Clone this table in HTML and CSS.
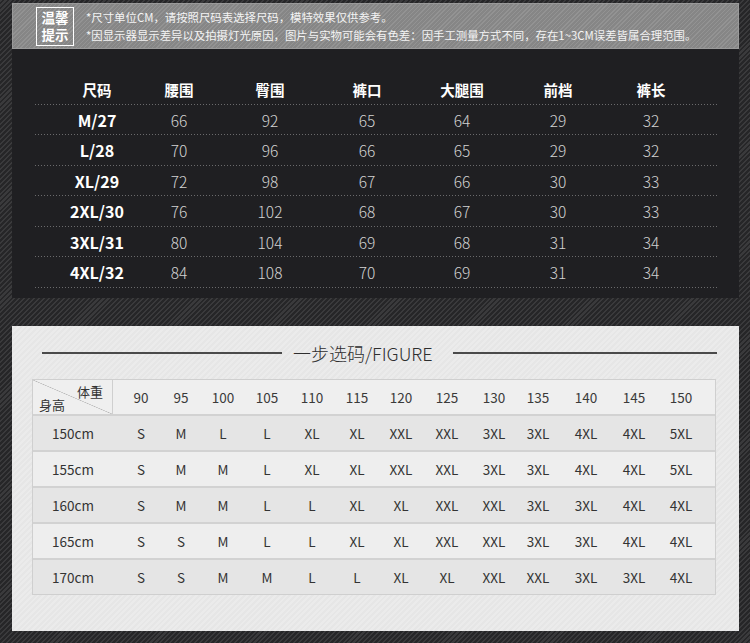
FILE: index.html
```html
<!DOCTYPE html>
<html lang="zh">
<head>
<meta charset="utf-8">
<title>尺码表</title>
<link rel="stylesheet" href="styles.css">
</head>
<body>
<div class="page">
  <section class="notice">
    <div class="tip"><span>温馨</span><span>提示</span></div>
    <div class="notes">
      <p>*尺寸单位CM，请按照尺码表选择尺码，模特效果仅供参考。</p>
      <p>*因显示器显示差异以及拍摄灯光原因，图片与实物可能会有色差：因手工测量方式不同，存在1~3CM误差皆属合理范围。</p>
    </div>
  </section>
  <section class="dark">
    <div class="sizes">
      <div class="srow head"><span>尺码</span><span>腰围</span><span>臀围</span><span>裤口</span><span>大腿围</span><span>前档</span><span>裤长</span></div>
      <div class="srow"><span class="sz">M/27</span><span>66</span><span>92</span><span>65</span><span>64</span><span>29</span><span>32</span></div>
      <div class="srow"><span class="sz">L/28</span><span>70</span><span>96</span><span>66</span><span>65</span><span>29</span><span>32</span></div>
      <div class="srow"><span class="sz">XL/29</span><span>72</span><span>98</span><span>67</span><span>66</span><span>30</span><span>33</span></div>
      <div class="srow"><span class="sz">2XL/30</span><span>76</span><span>102</span><span>68</span><span>67</span><span>30</span><span>33</span></div>
      <div class="srow"><span class="sz">3XL/31</span><span>80</span><span>104</span><span>69</span><span>68</span><span>31</span><span>34</span></div>
      <div class="srow"><span class="sz">4XL/32</span><span>84</span><span>108</span><span>70</span><span>69</span><span>31</span><span>34</span></div>
    </div>
  </section>
  <section class="light">
    <div class="title"><i class="line left"></i><h2>一步选码/FIGURE</h2><i class="line right"></i></div>
    <div class="chart">
      <div class="crow head">
        <div class="corner"><span class="w">体重</span><span class="h">身高</span></div>
        <span>90</span><span>95</span><span>100</span><span>105</span><span>110</span><span>115</span><span>120</span><span>125</span><span>130</span><span>135</span><span>140</span><span>145</span><span>150</span>
      </div>
      <div class="crow dk"><span>150cm</span><span>S</span><span>M</span><span>L</span><span>L</span><span>XL</span><span>XL</span><span>XXL</span><span>XXL</span><span>3XL</span><span>3XL</span><span>4XL</span><span>4XL</span><span>5XL</span></div>
      <div class="crow lt"><span>155cm</span><span>S</span><span>M</span><span>M</span><span>L</span><span>XL</span><span>XL</span><span>XXL</span><span>XXL</span><span>3XL</span><span>3XL</span><span>4XL</span><span>4XL</span><span>5XL</span></div>
      <div class="crow dk"><span>160cm</span><span>S</span><span>M</span><span>M</span><span>L</span><span>L</span><span>XL</span><span>XL</span><span>XXL</span><span>XXL</span><span>3XL</span><span>3XL</span><span>4XL</span><span>4XL</span></div>
      <div class="crow lt"><span>165cm</span><span>S</span><span>S</span><span>M</span><span>L</span><span>L</span><span>XL</span><span>XL</span><span>XXL</span><span>XXL</span><span>3XL</span><span>3XL</span><span>4XL</span><span>4XL</span></div>
      <div class="crow dk"><span>170cm</span><span>S</span><span>S</span><span>M</span><span>M</span><span>L</span><span>L</span><span>XL</span><span>XL</span><span>XXL</span><span>XXL</span><span>3XL</span><span>3XL</span><span>4XL</span></div>
    </div>
  </section>
</div>
</body>
</html>
```

FILE: styles.css
```css
* { box-sizing: border-box; }
html, body { margin: 0; padding: 0; }
body {
  width: 750px;
  height: 643px;
  overflow: hidden;
  font-family: "Noto Sans CJK SC", "Noto Sans", sans-serif;
  background-color: #343436;
  background-image: repeating-linear-gradient(135deg, #3a3a3c 0, #3a3a3c 1.5px, #262628 1.5px, #262628 3.5px);
}
.page { padding: 3px 11px 0 12px; }

.notice {
  height: 46px;
  display: flex;
  align-items: center;
  background-color: #8b8b8b;
  background-image: repeating-linear-gradient(135deg, #939393 0, #939393 1px, #868686 1px, #868686 3px);
  border: 1px solid #9a9a9a;
  padding-left: 23px;
}
.tip {
  width: 38px;
  height: 39px;
  border: 1.5px solid #fff;
  color: #fff;
  font-weight: 700;
  font-size: 13.5px;
  display: flex;
  flex-direction: column;
  align-items: center;
  justify-content: center;
}
.tip span { display: block; line-height: 17px; height: 17px; }
.notes { margin-left: 12px; color: #f4f4f4; font-size: 11.4px; line-height: 18px; }
.notes p { margin: 0; white-space: nowrap; }

.dark {
  background: #1f1f22;
  padding: 25px 0 10px 23px;
}
.srow {
  display: grid;
  grid-template-columns: 124px 40px 142px 52px 138px 54px 132px;
  height: 30.5px;
  align-items: center;
  background-image: linear-gradient(to right, #6a6a6c 1px, transparent 1px);
  background-size: 3px 1px;
  background-repeat: repeat-x;
  background-position: left bottom;
  width: 683px;
}
.srow span {
  display: flex;
  justify-content: center;
  color: #d2d2d2;
  font-size: 15.5px;
  font-weight: 300;
  white-space: nowrap;
}
.srow.head span { color: #fff; font-weight: 700; font-size: 14.5px; }
.srow span.sz { color: #fff; font-weight: 700; font-size: 16px; }

.light {
  margin-top: 28px;
  height: 305px;
  background-color: #e9e9e9;
  background-image: repeating-linear-gradient(135deg, #ebebeb 0, #ebebeb 2px, #e6e6e6 2px, #e6e6e6 4px);
  padding: 14px 23px 0 20px;
}
.title {
  display: flex;
  align-items: center;
  height: 26px;
  margin-left: 10px;
  margin-right: -1px;
}
.line { display: block; height: 2px; background: #4a4a4a; }
.line.left { width: 240px; }
.line.right { flex: 1; }
.title h2 {
  margin: 0 20px 0 11px;
  font-size: 18px;
  font-weight: 300;
  color: #2e2e2e;
  white-space: nowrap;
  line-height: 26px;
}
.chart {
  margin-top: 13px;
  width: 684px;
  border: 1px solid #cfcfcf;
}
.crow {
  display: grid;
  grid-template-columns: 80px 56px 24px 60px 28px 62px 28px 60px 32px 62px 26px 70px 26px 68px;
  height: 36px;
  align-items: center;
  border-top: 2px solid #d2d2d2;
}
.crow.head { height: 34px; border-top: 0; background: #efefef; }
.crow.dk { background: #e5e5e5; }
.crow.lt { background: #eeeeee; }
.crow > span {
  display: flex;
  justify-content: center;
  white-space: nowrap;
  font-size: 13.5px;
  color: #333;
  font-weight: 400;
}
.crow.head > span { color: #3a3a3a; }
.corner {
  position: relative;
  height: 34px;
  align-self: stretch;
  border-right: 1px solid #cfcfcf;
  background: linear-gradient(to top right, transparent calc(50% - 0.6px), #b8b8b8 50%, transparent calc(50% + 0.6px));
}
.corner span { position: absolute; font-size: 13px; color: #333; line-height: 16px; }
.corner .w { right: 9px; top: 4px; }
.corner .h { left: 6px; bottom: 1px; }
```
